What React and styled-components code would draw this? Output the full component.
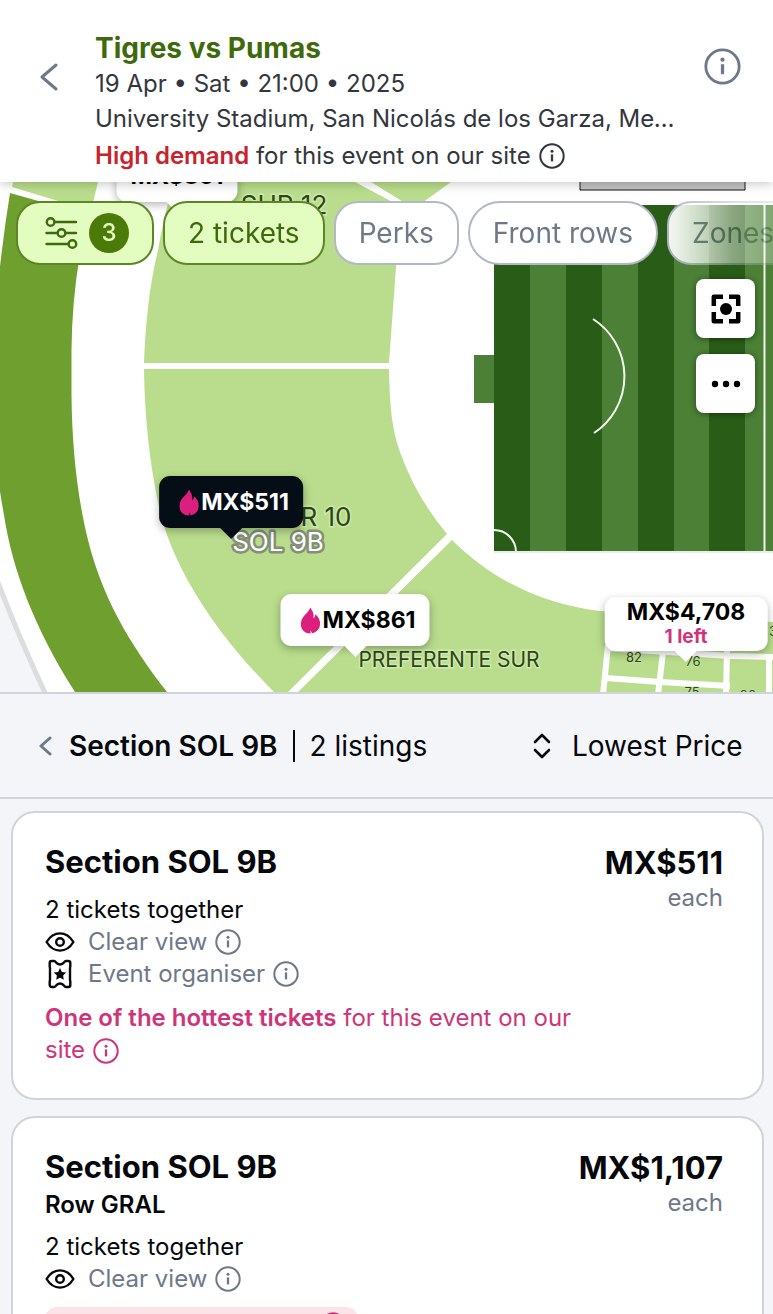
import React from "react";
import styled, { createGlobalStyle, css } from "styled-components";

const color = {
  ink: "#06080c",
  body: "#33363d",
  muted: "#6f7888",
  line: "#d0d3d9",
  panel: "#f3f5f8",
  green: "#3f6a0b",
  lime: "#e3fdc1",
  pink: "#cf3479",
};

const GlobalStyle = createGlobalStyle`
  *, *::before, *::after { box-sizing: border-box; }
  html, body { margin: 0; background: ${color.panel}; }
  body, button, select { font-family: Inter, "Liberation Sans", sans-serif; }
  h1, h2, h3, p, ul { margin: 0; padding: 0; }
  button { border: 0; padding: 0; background: none; color: inherit; cursor: pointer; }
  svg { display: block; flex: none; }
`;

const Page = styled.div`
  height: 100vh;
  display: flex;
  flex-direction: column;
  overflow: hidden;
  font-size: 24px;
  line-height: 32px;
  color: ${color.ink};
`;

/* ---------- header ---------- */

const Header = styled.header`
  position: relative;
  z-index: 3;
  flex: none;
  display: flex;
  align-items: flex-start;
  padding: 31px 32px 8px 36px;
  background: #fff;
  box-shadow: 0 2px 10px rgba(0, 0, 0, 0.22);
`;

const HeaderButton = styled.button`
  flex: none;
  display: flex;
  color: ${color.muted};
  margin-top: ${(p) => p.$top}px;
`;

const EventInfo = styled.div`
  flex: 1;
  min-width: 0;
  margin: 0 24px 0 33px;
  color: ${color.body};
`;

const EventTitle = styled.h1`
  font-size: 28px;
  line-height: 35px;
  font-weight: 700;
  color: ${color.green};
`;

const EventLine = styled.p`
  line-height: 35px;
  white-space: nowrap;
  overflow: hidden;
  text-overflow: ellipsis;
`;

const Demand = styled.p`
  display: flex;
  align-items: center;
  gap: 8px;
  margin-top: 2px;
  line-height: 36px;
  white-space: nowrap;

  strong {
    color: #c8232c;
    font-weight: 600;
  }
`;

const InfoButton = styled.button`
  display: inline-flex;
  vertical-align: middle;
`;

/* ---------- map ---------- */

const MapArea = styled.section`
  position: relative;
  flex: none;
  height: 510px;
  overflow: hidden;
  background: #fff;
`;

const MapDrawing = styled.svg`
  width: 100%;
  height: 100%;
`;

const Chips = styled.div`
  position: absolute;
  top: 19px;
  left: 0;
  right: 0;
  display: flex;
  align-items: flex-start;
  gap: 9px;
  padding: 0 0 4px 16px;
  overflow: hidden;
  mask-image: linear-gradient(to right, #000 calc(100% - 110px), rgba(0, 0, 0, 0.45) calc(100% - 40px), rgba(0, 0, 0, 0.3));
`;

const Chip = styled.button`
  flex: none;
  display: flex;
  align-items: center;
  height: 64px;
  padding: 0 23px;
  border: 2px solid #b3b8c6;
  border-radius: ${(p) => (p.$round ? 32 : 24)}px;
  background: #fff;
  color: ${color.muted};
  font-size: 28px;
  line-height: 32px;
  white-space: nowrap;

  ${(p) =>
    p.$active &&
    css`
      border-color: #5c8526;
      background: ${color.lime};
      color: ${color.green};
    `}

  svg {
    margin: 0 11px 0 3px;
  }
`;

const FilterCount = styled.span`
  width: 40px;
  height: 40px;
  border-radius: 50%;
  background: #4b7a08;
  color: ${color.lime};
  font-size: 24px;
  line-height: 40px;
  font-weight: 500;
`;

const MapTools = styled.div`
  position: absolute;
  top: 97px;
  right: 18px;
  display: grid;
  gap: 16px;
`;

const ToolButton = styled.button`
  display: grid;
  place-items: center;
  width: 59px;
  height: 59px;
  border-radius: 8px;
  background: #fff;
  color: #000;
  box-shadow: 0 1px 6px rgba(0, 0, 0, 0.45);
`;

const Pin = styled.button`
  position: absolute;
  left: ${(p) => p.$x}px;
  top: ${(p) => p.$y}px;
  transform: translate(-50%, -100%);
  min-height: 52px;
  padding: ${(p) => (p.$tall ? "1px 22px 3px" : "8px 14px")};
  display: flex;
  flex-direction: ${(p) => (p.$tall ? "column" : "row")};
  align-items: center;
  justify-content: center;
  border-radius: 11px;
  background: ${(p) => (p.$dark ? "#050d16" : "#fff")};
  color: ${(p) => (p.$dark ? "#fff" : "#000")};
  font-size: 23px;
  line-height: 28px;
  font-weight: 700;
  box-shadow: 0 3px 8px rgba(0, 0, 0, 0.28);

  &::after {
    content: "";
    position: absolute;
    left: 50%;
    top: 100%;
    transform: translateX(-50%);
    border: 11px solid transparent;
    border-bottom-width: 0;
    border-top-color: ${(p) => (p.$dark ? "#050d16" : "#fff")};
  }

  svg {
    margin: 0 2px 0 6px;
  }

  small {
    color: ${color.pink};
    font-size: 19px;
    line-height: 22px;
  }
`;

/* ---------- listings ---------- */

const SectionBar = styled.div`
  flex: none;
  display: flex;
  align-items: center;
  justify-content: space-between;
  height: 107px;
  padding: 0 30px 0 38px;
  border: solid ${color.line};
  border-width: 2px 0;
  background: ${color.panel};
  font-size: 28px;
`;

const SectionName = styled.div`
  display: flex;
  align-items: center;

  button {
    display: flex;
    margin-right: 15px;
    color: ${color.muted};
  }

  h2 {
    font-size: 28px;
    line-height: 32px;
    font-weight: 600;
    padding-right: 15px;
    margin-right: 15px;
    border-right: 2px solid ${color.ink};
  }
`;

const Sort = styled.label`
  display: flex;
  align-items: center;
  gap: 20px;

  select {
    appearance: none;
    border: 0;
    padding: 0;
    background: none;
    color: ${color.ink};
    font-size: 28px;
    line-height: 32px;
  }
`;

const Listings = styled.main`
  flex: 1;
  min-height: 0;
  overflow: hidden;
  display: flex;
  flex-direction: column;
  gap: 16px;
  padding: 12px 9px 0 11px;
`;

const Card = styled.article`
  flex: none;
  display: flex;
  justify-content: space-between;
  gap: 16px;
  padding: 31px 39px 32px 32px;
  border: 2px solid ${color.line};
  border-radius: 24px;
  background: #fff;
`;

const CardBody = styled.div`
  display: flex;
  flex-direction: column;
`;

const CardTitle = styled.h3`
  font-size: 31px;
  line-height: 36px;
  font-weight: 700;
  margin-bottom: 4px;
`;

const CardRow = styled.p`
  font-weight: 600;
`;

const Together = styled.p`
  margin-top: 10px;
`;

const Feature = styled.div`
  display: flex;
  align-items: center;
  color: ${color.muted};

  > svg {
    margin-right: 13px;
    color: ${color.ink};
  }

  > button {
    margin-left: 8px;
  }
`;

const Hot = styled.p`
  max-width: 540px;
  margin-top: 12px;
  color: ${color.pink};

  strong {
    font-weight: 600;
  }

  button {
    margin-left: 1px;
    height: 26px;
  }
`;

const Tag = styled.div`
  display: flex;
  justify-content: flex-end;
  width: 313px;
  margin-top: 12px;
  padding: 5px 12px;
  border-radius: 12px;
  background: #fbe3e7;
  color: ${color.pink};
`;

const Price = styled.div`
  text-align: right;

  strong {
    display: block;
    font-size: 31px;
    line-height: 38px;
    font-weight: 700;
  }

  span {
    color: ${color.muted};
  }
`;

/* ---------- icons ---------- */

const Stroke = ({ w, h = w, width, children }) => (
  <svg
    width={w}
    height={h}
    viewBox={`0 0 ${w} ${h}`}
    fill="none"
    stroke="currentColor"
    strokeWidth={width}
    strokeLinecap="round"
    strokeLinejoin="round"
    aria-hidden="true"
  >
    {children}
  </svg>
);

const InfoIcon = ({ size = 26 }) => (
  <svg width={size} height={size} viewBox="0 0 26 26" fill="none" stroke="currentColor" strokeWidth="2" aria-hidden="true">
    <circle cx="13" cy="13" r="11.7" />
    <path d="M13 11.4v7" strokeWidth="2.300" />
    <circle cx="13" cy="8.2" r="1.5" fill="currentColor" stroke="none" />
  </svg>
);

const Info = ({ label }) => (
  <InfoButton aria-label={label}>
    <InfoIcon />
  </InfoButton>
);

const EyeIcon = () => (
  <Stroke w={30} width={2.400}>
    <path d="M1.600 15C5 9.400 9.600 6.400 15 6.400S25 9.400 28.400 15C25 20.600 20.400 23.600 15 23.600S5 20.600 1.600 15Z" />
    <circle cx="15" cy="15" r="3.800" />
  </Stroke>
);

const TicketIcon = () => (
  <Stroke w={30} width={2.400}>
    <path d="M6.700 2h2.400c1 0 1.300.6 1.800 1.300a5 5 0 0 0 8.200 0C19.600 2.600 19.900 2 20.900 2h2.400c1.200 0 2 .8 2 2v3.500l-.3 1.500v12l.3 1.500V26c0 1.200-.8 2-2 2h-2.400c-1 0-1.300-.6-1.800-1.300a5 5 0 0 0-8.200 0C10.400 27.400 10.100 28 9.100 28H6.700c-1.200 0-2-.8-2-2v-3.500l.3-1.500V9l-.3-1.500V4c0-1.200.8-2 2-2Z" />
    <path
      d="M15 9l1.900 3.900 4.300.6-3.100 3 .7 4.300-3.800-2-3.800 2 .7-4.300-3.100-3 4.300-.6Z"
      fill="currentColor"
      stroke="none"
    />
  </Stroke>
);

const SlidersIcon = () => (
  <Stroke w={34} width={2.400}>
    <path d="M11 6H32M2.500 17H13.500M21.500 17H32M2.500 28H24.500" />
    <circle cx="6.600" cy="6" r="3.800" />
    <circle cx="17.500" cy="17" r="3.800" />
    <circle cx="28.400" cy="28" r="3.800" />
  </Stroke>
);

const FlameIcon = () => (
  <svg width="20" height="27" viewBox="0 0 20 27" fill="#dc1f7c" aria-hidden="true">
    <path d="M9.800.5c1.600 2.600 3.200 5 3.300 8 .1 1-.1 2-.3 2.900 1.300-.9 2-2.300 2-4.200C18 9.800 19.600 12.900 19.600 16.600c0 4.300-2.200 7.500-5.600 8.900l-2.200.7c-.9-1-1.300-1.700-1.400-2.900-.4 1-.4 1.700-.2 3.200-2.900-.1-5-.6-6.800-2.200C1.300 22.500.4 19.900.4 17c0-3.600 1.700-6.400 4.200-9.200C6.600 5.600 8.800 3.400 9.800.5Z" />
  </svg>
);

/* ---------- stadium map ---------- */

const MapSection = styled.path`
  fill: #b9dd8c;
`;

const MapLabel = styled.text`
  fill: #2d4713;
  font-size: ${(p) => p.$size}px;
  text-anchor: middle;
  dominant-baseline: central;
  stroke: #cfe8b0;
  stroke-width: ${(p) => (p.$size > 16 ? 3 : 1)}px;
  paint-order: stroke;
`;

const SelectedLabel = styled(MapLabel)`
  fill: #fff;
  stroke: #858f78;
  stroke-width: 5px;
  stroke-linejoin: round;
`;

const stripes = [494, 566, 638, 709];

const Stadium = () => (
  <MapDrawing viewBox="0 182 773 510" preserveAspectRatio="xMinYMin slice" role="img" aria-label="Stadium seating map">
    <path d="M0 588Q20 640 45 694H0Z" fill={color.panel} />
    <path d="M-3 580Q20 640 47 697" fill="none" stroke="#dcdddf" strokeWidth="5" />

    <path d="M10 193L88 215Q72 282 71.500 350V395C72 450 78 500 88 540C102 596 128 642 167 692H75C34 628 12 568 4 515Q-10 440-8 370Q-4 280 10 193Z" fill="#6e9f2f" />
    <MapSection d="M13 182H98L91 211L12 187Z" />

    <MapSection d="M174 182H355L398 205V240L389 363H144Q146 300 158 250Q164 215 174 182Z" />
    <MapSection d="M371 182H451L422 203H405Z" />
    <MapSection d="M144 369H389C390 405 391 425 400 452Q416 497 447 534L288 692H274C214 632 178 573 162 520Q145 450 144 369Z" />
    <MapSection d="M452 540C490 578 540 604 600 611L773 622V692H298Z" />

    <g fill="none" stroke="#fff" strokeWidth="6">
      <path d="M608 645L603 695M663 652L658 695M727 650L726 695M769 657V695" />
      <path d="M606 648L730 656L773 657M606 678L660 682L730 686" />
    </g>

    <g>
      <path d="M580 170V190H745V170Z" fill="#c4c4c4" stroke="#16181a" />
      <path d="M494 205H773V551H494Z" fill="#4b8036" />
      {stripes.map((x) => (
        <path key={x} d={`M${x} 205h36V551h-36Z`} fill="#295d17" />
      ))}
      <path d="M474 355H494V403H474Z" fill="#4b8036" />
      <g fill="none" stroke="#f1f7ec" strokeWidth="2">
        <path d="M593 319A68 68 0 0 1 594 433" />
        <path d="M494 530A22 22 0 0 1 516 552" />
        <path d="M764.500 205V551" />
      </g>
      <path d="M494 552H773" stroke="#d5dccf" />
    </g>

    <MapLabel $size={26} x="284" y="204">SUR 12</MapLabel>
    <MapLabel $size={26} x="308" y="516">SUR 10</MapLabel>
    <SelectedLabel $size={26} x="278" y="541">SOL 9B</SelectedLabel>
    <MapLabel $size={21} x="449" y="659">PREFERENTE SUR</MapLabel>
    <MapLabel $size={13} x="634" y="657">82</MapLabel>
    <MapLabel $size={13} x="693" y="661">76</MapLabel>
    <MapLabel $size={13} x="692" y="692">75</MapLabel>
    <MapLabel $size={13} x="748" y="695">90</MapLabel>
    <MapLabel $size={13} x="773" y="631">3</MapLabel>
  </MapDrawing>
);

export default function App() {
  return (
    <Page>
      <GlobalStyle />
      <Header>
        <HeaderButton $top={31} aria-label="Back">
          <Stroke w={26} h={30} width={3}>
            <path d="M20 3L6 15l14 12" />
          </Stroke>
        </HeaderButton>
        <EventInfo>
          <EventTitle>Tigres vs Pumas</EventTitle>
          <EventLine>19 Apr • Sat • 21:00 • 2025</EventLine>
          <EventLine>University Stadium, San Nicolás de los Garza, Mexico</EventLine>
          <Demand>
            <span>
              <strong>High demand</strong> for this event on our site
            </span>
            <Info label="About demand" />
          </Demand>
        </EventInfo>
        <HeaderButton $top={17} aria-label="Event information">
          <InfoIcon size={37} />
        </HeaderButton>
      </Header>

      <MapArea>
        <Stadium />
        <Pin $x={177} $y={20}>MX$861</Pin>
        <Pin $x={231} $y={346} $dark>
          <FlameIcon />
          MX$511
        </Pin>
        <Pin $x={355} $y={464}>
          <FlameIcon />
          MX$861
        </Pin>
        <Pin $x={686} $y={469} $tall>
          MX$4,708
          <small>1 left</small>
        </Pin>
        <Chips>
          <Chip $active aria-label="Filters, 3 applied">
            <SlidersIcon />
            <FilterCount>3</FilterCount>
          </Chip>
          <Chip $active>2 tickets</Chip>
          <Chip>Perks</Chip>
          <Chip $round>Front rows</Chip>
          <Chip>Zones</Chip>
        </Chips>
        <MapTools>
          <ToolButton aria-label="Centre map">
            <svg width="30" height="30" viewBox="0 0 30 30" fill="none" stroke="currentColor" strokeWidth="4.500" strokeLinejoin="round" aria-hidden="true">
              <path d="M2.800 12V2.800H12M18 2.800H27.200V12M27.200 18V27.200H18M12 27.200H2.800V18" />
              <circle cx="15" cy="15" r="6" fill="currentColor" stroke="none" />
            </svg>
          </ToolButton>
          <ToolButton aria-label="More options">
            <svg width="30" height="30" viewBox="0 0 30 30" fill="currentColor" aria-hidden="true">
              <circle cx="4" cy="15" r="3.200" />
              <circle cx="15" cy="15" r="3.200" />
              <circle cx="26" cy="15" r="3.200" />
            </svg>
          </ToolButton>
        </MapTools>
      </MapArea>

      <SectionBar>
        <SectionName>
          <button aria-label="Back to all sections">
            <Stroke w={16} h={20} width={3}>
              <path d="M12 2L3 10l9 8" />
            </Stroke>
          </button>
          <h2>Section SOL 9B</h2>
          <span>2 listings</span>
        </SectionName>
        <Sort>
          <Stroke w={20} h={26} width={2.600}>
            <path d="M3 9l7-7 7 7M3 17l7 7 7-7" />
          </Stroke>
          <select aria-label="Sort listings" defaultValue="Lowest Price">
            <option>Lowest Price</option>
            <option>Best Seats</option>
          </select>
        </Sort>
      </SectionBar>

      <Listings>
        <Card>
          <CardBody>
            <CardTitle>Section SOL 9B</CardTitle>
            <Together>2 tickets together</Together>
            <Feature>
              <EyeIcon />
              Clear view
              <Info label="About clear view" />
            </Feature>
            <Feature>
              <TicketIcon />
              Event organiser
              <Info label="About event organiser" />
            </Feature>
            <Hot>
              <strong>One of the hottest tickets</strong> for this event on our site <Info label="About hottest tickets" />
            </Hot>
          </CardBody>
          <Price>
            <strong>MX$511</strong>
            <span>each</span>
          </Price>
        </Card>
        <Card>
          <CardBody>
            <CardTitle>Section SOL 9B</CardTitle>
            <CardRow>Row GRAL</CardRow>
            <Together>2 tickets together</Together>
            <Feature>
              <EyeIcon />
              Clear view
              <Info label="About clear view" />
            </Feature>
            <Tag>
              <Info label="About this ticket" />
            </Tag>
          </CardBody>
          <Price>
            <strong>MX$1,107</strong>
            <span>each</span>
          </Price>
        </Card>
      </Listings>
    </Page>
  );
}
